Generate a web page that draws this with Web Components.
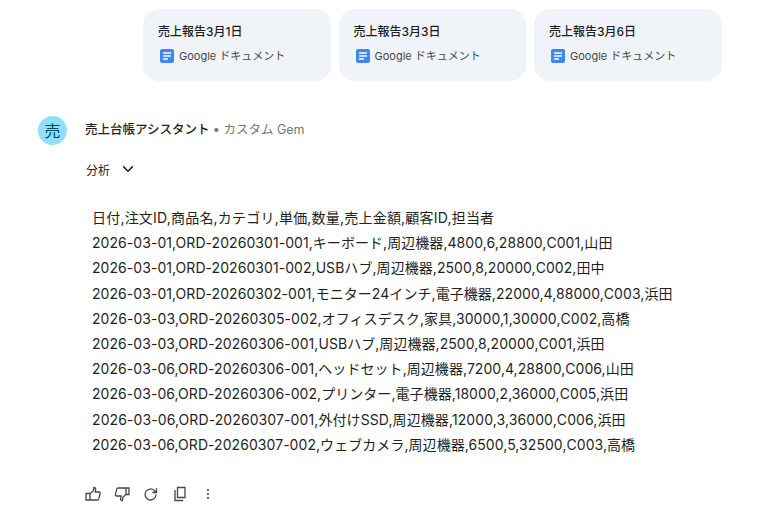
<!DOCTYPE html>
<html lang="ja">
<head>
<meta charset="utf-8">
<title>売上台帳アシスタント</title>
<style>
  html, body { margin: 0; background: #fff; }
  body { font-family: Inter, "Noto Sans CJK JP", sans-serif; color: #1f1f1f; }
</style>
</head>
<body>
<chat-page>
  <file-row>
    <file-card title="売上報告3月1日"></file-card>
    <file-card title="売上報告3月3日"></file-card>
    <file-card title="売上報告3月6日"></file-card>
  </file-row>
  <gem-header initial="売" name="売上台帳アシスタント" kind="カスタム Gem"></gem-header>
  <analysis-toggle label="分析"></analysis-toggle>
  <csv-block>
    <div>日付,注文ID,商品名,カテゴリ,単価,数量,売上金額,顧客ID,担当者</div>
    <div>2026-03-01,ORD-20260301-001,キーボード,周辺機器,4800,6,28800,C001,山田</div>
    <div>2026-03-01,ORD-20260301-002,USBハブ,周辺機器,2500,8,20000,C002,田中</div>
    <div>2026-03-01,ORD-20260302-001,モニター24インチ,電子機器,22000,4,88000,C003,浜田</div>
    <div>2026-03-03,ORD-20260305-002,オフィスデスク,家具,30000,1,30000,C002,高橋</div>
    <div>2026-03-03,ORD-20260306-001,USBハブ,周辺機器,2500,8,20000,C001,浜田</div>
    <div>2026-03-06,ORD-20260306-001,ヘッドセット,周辺機器,7200,4,28800,C006,山田</div>
    <div>2026-03-06,ORD-20260306-002,プリンター,電子機器,18000,2,36000,C005,浜田</div>
    <div>2026-03-06,ORD-20260307-001,外付けSSD,周辺機器,12000,3,36000,C006,浜田</div>
    <div>2026-03-06,ORD-20260307-002,ウェブカメラ,周辺機器,6500,5,32500,C003,高橋</div>
  </csv-block>
  <action-bar></action-bar>
</chat-page>

<script>
class ChatPage extends HTMLElement {
  constructor() {
    super()
    this.attachShadow({ mode: 'open' }).innerHTML = `
      <style>
        :host { display: block; width: 774px; height: 525px; overflow: hidden; padding-top: 9px; box-sizing: border-box; }
      </style>
      <slot></slot>`
  }
}

class FileRow extends HTMLElement {
  constructor() {
    super()
    this.attachShadow({ mode: 'open' }).innerHTML = `
      <style>
        :host { display: flex; gap: 8px; padding-left: 143px; }
      </style>
      <slot></slot>`
  }
}

class FileCard extends HTMLElement {
  connectedCallback() {
    this.attachShadow({ mode: 'open' }).innerHTML = `
      <style>
        :host { display: block; width: 187.5px; height: 72px; box-sizing: border-box; padding: 15px 15px 0; background: #f0f4f9; border-radius: 16px; }
        .title { font-size: 12px; line-height: 16px; font-weight: 500; color: #1f1f1f; }
        .meta { display: flex; align-items: center; gap: 5px; margin-top: 8px; padding-left: 2px; font-size: 11px; line-height: 16px; color: #444746; }
        svg { display: block; }
      </style>
      <div class="title">${this.getAttribute('title')}</div>
      <div class="meta">
        <svg width="14" height="14" viewBox="0 0 14 14">
          <rect width="14" height="14" rx="2" fill="#4285f4"/>
          <path d="M3 4h8M3 7h8M3 10h5" stroke="#fff" stroke-width="1.300" fill="none"/>
        </svg>
        <span>Google ドキュメント</span>
      </div>`
  }
}

class GemHeader extends HTMLElement {
  connectedCallback() {
    this.attachShadow({ mode: 'open' }).innerHTML = `
      <style>
        :host { display: flex; align-items: center; margin-top: 34px; padding-left: 38px; height: 30px; }
        .avatar { width: 29px; height: 29px; border-radius: 50%; background: #8fdfff; color: #004a5c; display: flex; align-items: center; justify-content: center; font-size: 16px; }
        .name { margin-left: 18px; margin-top: -4px; font-size: 12.500px; font-weight: 500; color: #1f1f1f; }
        .kind { font-weight: 400; color: #747775; }
      </style>
      <div class="avatar">${this.getAttribute('initial')}</div>
      <div class="name">${this.getAttribute('name')} <span class="kind">• ${this.getAttribute('kind')}</span></div>`
  }
}

class AnalysisToggle extends HTMLElement {
  connectedCallback() {
    this.attachShadow({ mode: 'open' }).innerHTML = `
      <style>
        :host { display: flex; align-items: center; gap: 12px; margin-top: 14px; padding-left: 86px; height: 20px; font-size: 12px; color: #1f1f1f; }
        svg { display: block; }
      </style>
      <span>${this.getAttribute('label')}</span>
      <svg width="12" height="8" viewBox="0 0 12 8"><path d="M1.200 1.400 6 6.200l4.800-4.800" fill="none" stroke="#1f1f1f" stroke-width="1.500"/></svg>`
  }
}

class CsvBlock extends HTMLElement {
  constructor() {
    super()
    this.attachShadow({ mode: 'open' }).innerHTML = `
      <style>
        :host { display: block; margin-top: 26px; padding-left: 92px; font-size: 14px; line-height: 25.2px; color: #1f1f1f; white-space: nowrap; letter-spacing: .06px; }
        ::slotted(:nth-child(1)) { letter-spacing: .21px; }
        ::slotted(:nth-child(5)) { letter-spacing: .08px; }
        ::slotted(:nth-child(9)) { letter-spacing: .1px; }
      </style>
      <slot></slot>`
  }
}

class ActionBar extends HTMLElement {
  constructor() {
    super()
    this.attachShadow({ mode: 'open' }).innerHTML = `
      <style>
        :host { display: flex; align-items: center; gap: 13px; margin-top: 29px; padding-left: 85px; height: 16px; }
        svg { display: block; width: 16px; height: 16px; fill: none; stroke: #444746; stroke-width: 1.300; }
        svg:last-child { margin-left: -1px; }
      </style>
      <svg viewBox="0 0 16 16"><path d="M1 7.500h4v6.500H1zM5 7.500l3.200-2.500.7-3.500c1.400 0 2 1 1.700 2.300L10.200 6H14c.8 0 1.300.7 1.100 1.400l-1.300 5.500c-.2.700-.7 1.100-1.400 1.100H5"/></svg>
      <svg viewBox="0 0 16 16"><path d="M15 8.500h-3V2h3zM12 8.500l-3 2.500-.7 3.500c-1.400 0-2-1-1.700-2.300L7 10H2.500c-.8 0-1.300-.7-1.100-1.400l1.300-5.500C2.900 2.400 3.400 2 4.100 2H12"/></svg>
      <svg viewBox="0 0 16 16"><path d="M13 8.500a5.500 5.500 0 1 1-1.600-3.900L13.500 6.500M13.500 2.300v4.200h-4.200"/></svg>
      <svg viewBox="0 0 16 16"><path d="M5.500 1.500h7.500v10H5.500zM3 4v10.500h8"/></svg>
      <svg viewBox="0 0 16 16"><circle cx="8" cy="4" r="1.100" fill="#444746" stroke="none"/><circle cx="8" cy="8" r="1.100" fill="#444746" stroke="none"/><circle cx="8" cy="12" r="1.100" fill="#444746" stroke="none"/></svg>`
  }
}

customElements.define('chat-page', ChatPage)
customElements.define('file-row', FileRow)
customElements.define('file-card', FileCard)
customElements.define('gem-header', GemHeader)
customElements.define('analysis-toggle', AnalysisToggle)
customElements.define('csv-block', CsvBlock)
customElements.define('action-bar', ActionBar)
</script>
</body>
</html>
